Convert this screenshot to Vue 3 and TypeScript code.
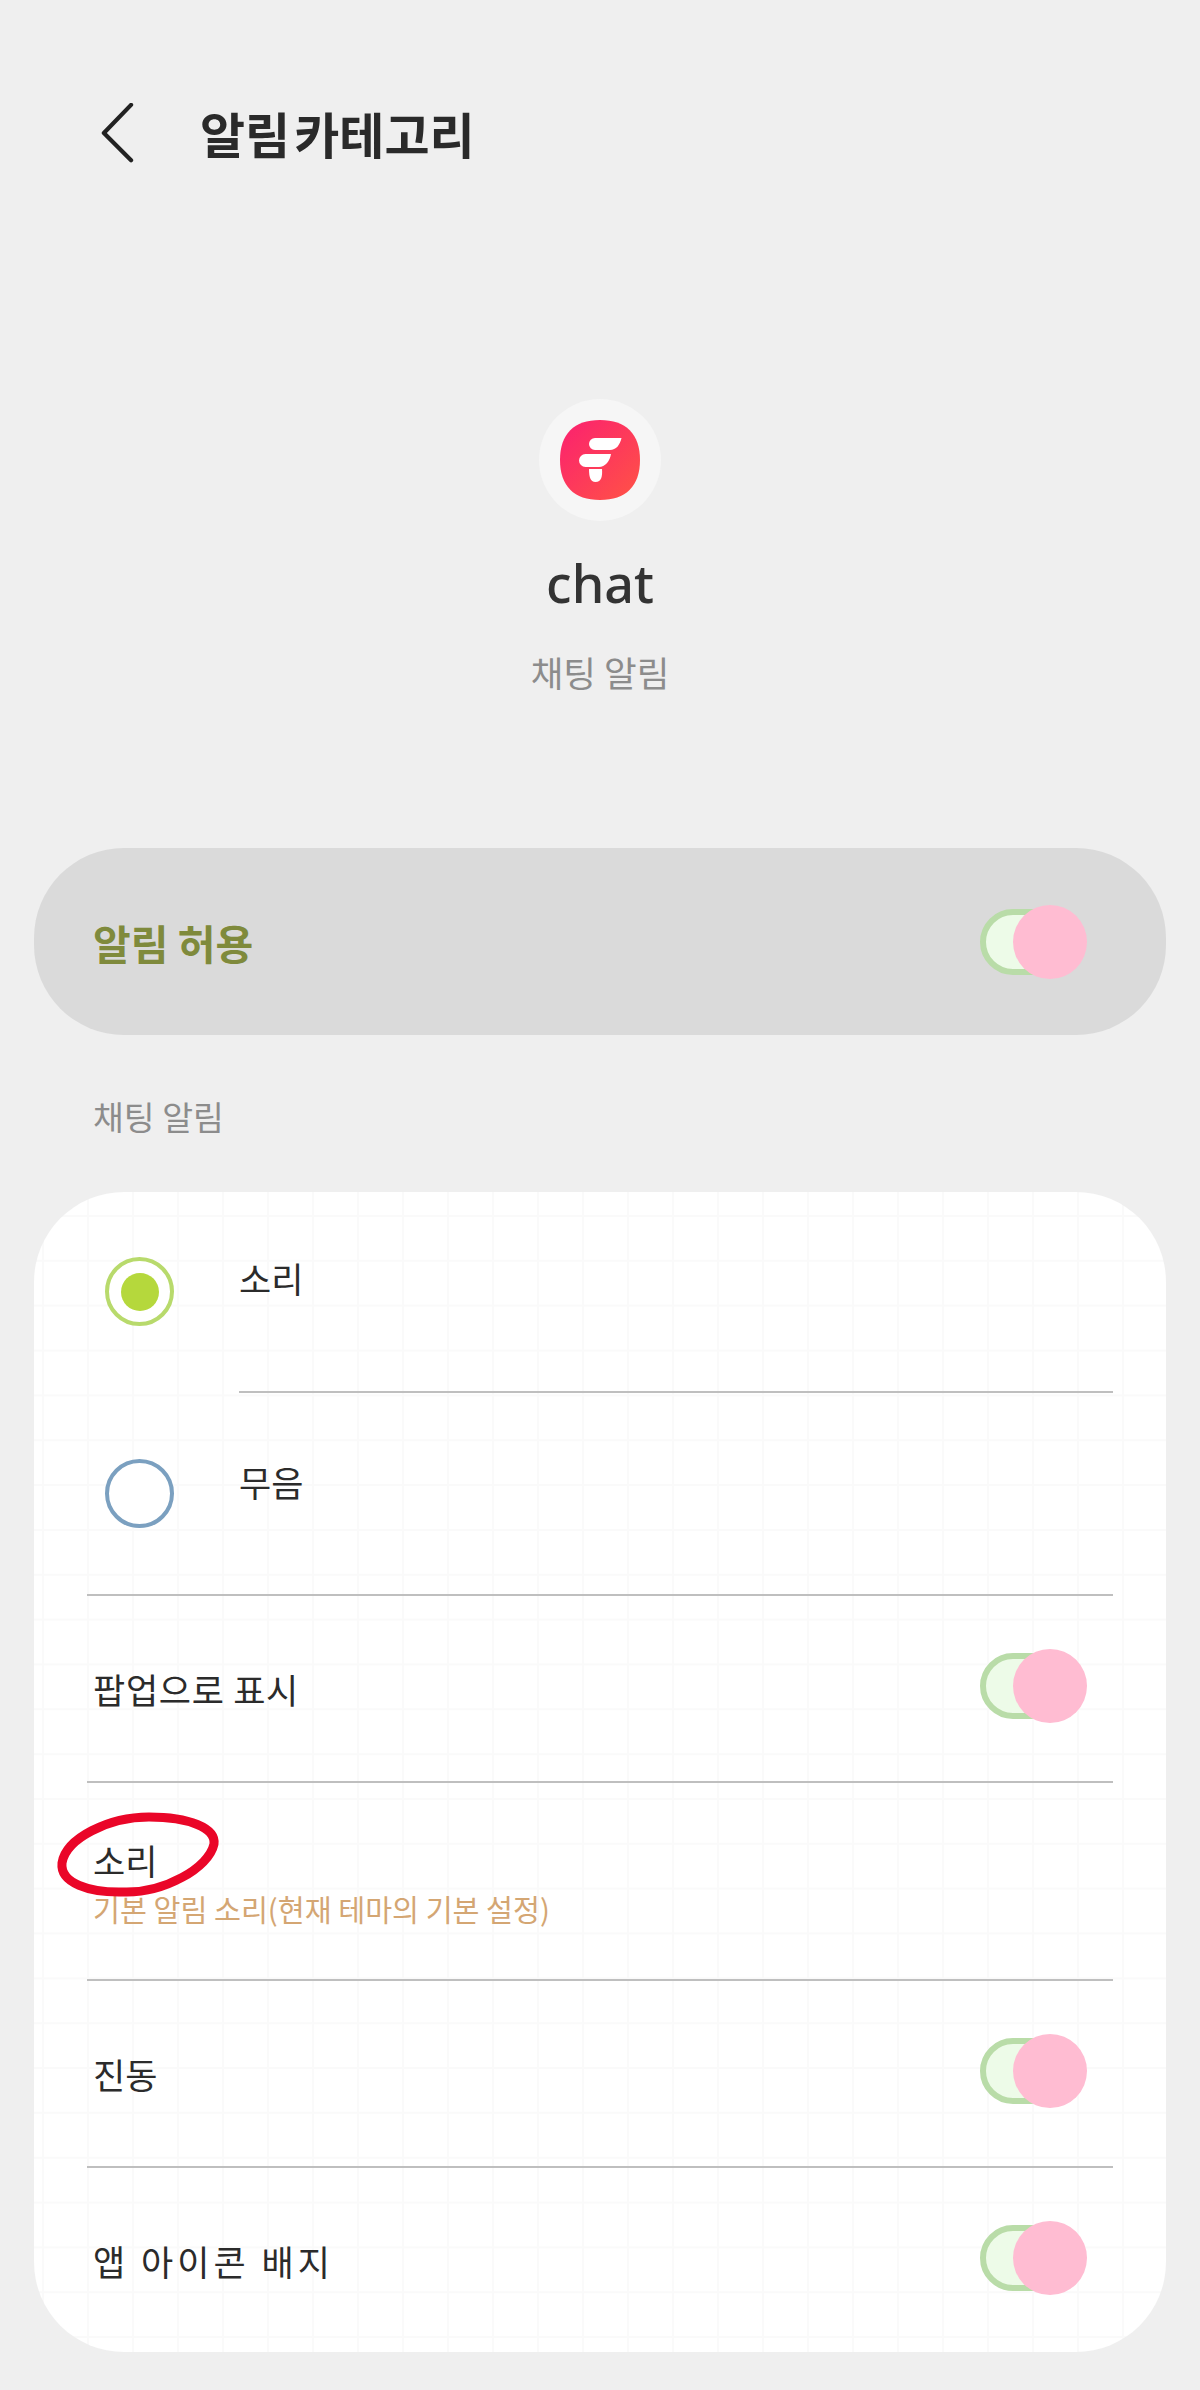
<template>
  <div class="page">
    <header class="top-bar">
      <svg class="back" viewBox="0 0 34 64" fill="none">
        <path d="M32 2 L3 32 L32 61" />
      </svg>
      <h1>알림 카테고리</h1>
    </header>

    <section class="app-info">
      <div class="icon-wrap">
        <svg class="app-icon" viewBox="0 0 80 80">
          <defs>
            <linearGradient id="logo" x1="0" y1="0" x2="1" y2="1">
              <stop offset="0" stop-color="#fb2070" />
              <stop offset="1" stop-color="#ff5345" />
            </linearGradient>
          </defs>
          <path fill="url(#logo)" d="M40 0C66 0 80 14 80 40C80 66 66 80 40 80C14 80 0 66 0 40C0 14 14 0 40 0Z" />
          <path fill="#fff" d="M35 18H61.5C60 25 56 30 50 30H35A6 6 0 0 1 35 18Z" />
          <path fill="#fff" d="M25.5 34H51C50 41 45 47 39 47H25.5A6.5 6.5 0 0 1 25.5 34Z" />
          <path fill="#fff" d="M29 49H42C42.5 56 41.5 62 35.5 62C30 62 29 56 29 49Z" />
        </svg>
      </div>
      <div class="app-name">chat</div>
      <div class="app-sub">채팅 알림</div>
    </section>

    <div class="allow-pill">
      <span>알림 허용</span>
      <div class="toggle"><i class="track"></i><i class="knob"></i></div>
    </div>

    <div class="section-label">채팅 알림</div>

    <div class="card">
      <div
        v-for="(r, i) in radios"
        :key="r.label"
        class="radio-row"
        :class="{ last: i === radios.length - 1 }"
      >
        <span class="radio" :class="{ on: r.on }"></span>
        <div class="radio-body"><span>{{ r.label }}</span></div>
      </div>

      <div class="row row-popup">
        <span>팝업으로 표시</span>
        <div class="toggle"><i class="track"></i><i class="knob"></i></div>
      </div>

      <div class="row row-sound">
        <div class="sound-text">
          <span class="circled">
            소리
            <svg class="scribble" viewBox="0 0 170 95" fill="none">
              <path d="M8 55C12 30 55 9 95 9C135 9 162 20 160 36C155 60 110 85 70 84C35 85 6 75 8 55Z" />
            </svg>
          </span>
          <small>기본 알림 소리(현재 테마의 기본 설정)</small>
        </div>
      </div>

      <div class="row row-vibrate">
        <span>진동</span>
        <div class="toggle"><i class="track"></i><i class="knob"></i></div>
      </div>

      <div class="row row-badge">
        <span>앱 아이콘 배지</span>
        <div class="toggle"><i class="track"></i><i class="knob"></i></div>
      </div>
    </div>
  </div>
</template>

<script setup lang="ts">
interface RadioItem {
  label: string;
  on: boolean;
}

const radios: RadioItem[] = [
  { label: '소리', on: true },
  { label: '무음', on: false }
];
</script>

<style>
html, body { background: #efefef; }
</style>

<style scoped>
.page {
  width: 1200px;
  height: 2390px;
  box-sizing: border-box;
  padding-top: 103px;
  background: #efefef;
  color: #2b2b2b;
  font-family: "Noto Sans CJK KR", "Noto Sans", sans-serif;
}
.top-bar { display: flex; align-items: center; height: 60px; padding-left: 100px; }
.back { width: 34px; height: 60px; }
.back path { stroke: #222; stroke-width: 4.5; stroke-linecap: round; stroke-linejoin: round; }
.top-bar h1 { margin: 0 0 0 66px; font-size: 49px; font-weight: 700; word-spacing: -7px; line-height: 60px; color: #2a2a2a; }

.app-info { display: flex; flex-direction: column; align-items: center; margin-top: 236px; }
.icon-wrap {
  width: 122px;
  height: 122px;
  border-radius: 50%;
  background: #f6f6f6;
  display: flex;
  align-items: center;
  justify-content: center;
}
.app-icon { width: 80px; height: 80px; }
.app-name { margin-top: 27px; font-family: "Noto Sans", sans-serif; font-size: 52px; font-weight: 500; line-height: 70px; color: #333; }
.app-sub { margin-top: 29px; font-size: 35.5px; line-height: 50px; color: #8c8c8c; }

.allow-pill {
  display: flex;
  align-items: center;
  justify-content: space-between;
  box-sizing: border-box;
  height: 187px;
  margin: 151px 34px 0;
  padding: 0 78px 0 59px;
  border-radius: 90px;
  background: #dadada;
  font-size: 41px;
  font-weight: 700;
  color: #7f8a3c;
}

.section-label { margin: 57px 0 0 93px; font-size: 33.5px; line-height: 48px; color: #8c8c8c; }

.card {
  box-sizing: border-box;
  height: 1160px;
  margin: 52px 34px 0;
  border-radius: 90px;
  background-color: #fff;
  background-image:
    linear-gradient(to right, #fafafa 2px, transparent 2px),
    linear-gradient(to bottom, #fafafa 2px, transparent 2px);
  background-size: 45px 44.85px;
  background-position: 8px 23px;
  font-size: 35px;
  color: #2b2b2b;
}

.radio-row { display: flex; height: 201px; margin: 0 53px; }
.radio-row.last { border-bottom: 2px solid #bfbfbf; }
.radio {
  flex: none;
  box-sizing: border-box;
  width: 69px;
  height: 69px;
  margin: 65px 65px 0 18px;
  border-radius: 50%;
  border: 4px solid #7ba0c0;
  background: #fff;
  display: flex;
  align-items: center;
  justify-content: center;
}
.radio-row.last .radio { margin-top: 66px; }
.radio.on { border-color: #b8da6c; }
.radio.on::after { content: ""; width: 38px; height: 38px; border-radius: 50%; background: #b5d83c; }
.radio-body { flex: 1; padding-top: 61px; line-height: 50px; border-bottom: 2px solid #bfbfbf; }
.radio-row.last .radio-body { padding-top: 64px; border-bottom: 0; }

.row {
  display: flex;
  align-items: center;
  justify-content: space-between;
  box-sizing: border-box;
  margin: 0 53px;
  padding: 0 25px 0 6px;
  border-bottom: 2px solid #bfbfbf;
}
.row-popup { height: 187px; }
.row-popup span { letter-spacing: 0.7px; }
.row-sound { height: 198px; align-items: flex-start; padding-top: 52px; }
.row-vibrate { height: 187px; }
.row-badge { height: 184px; border-bottom: 0; }
.row-badge span { letter-spacing: 4px; }
.row .toggle { margin-top: -5px; }

.sound-text { display: flex; flex-direction: column; }
.circled { position: relative; line-height: 50px; }
.sound-text small { margin-top: 2px; font-size: 29.3px; line-height: 42px; color: #d4a673; }
.scribble { position: absolute; left: -39px; top: -27px; width: 170px; height: 95px; filter: blur(0.6px); }
.scribble path { stroke: #ea0628; stroke-width: 9; }

.toggle { position: relative; flex: none; width: 108px; height: 74px; }
.track {
  position: absolute;
  left: 0;
  top: 4px;
  box-sizing: border-box;
  width: 84px;
  height: 66px;
  border: 6px solid #b9dca8;
  border-radius: 33px;
  background: #edfbe8;
}
.knob { position: absolute; right: 1px; top: 0; width: 74px; height: 74px; border-radius: 50%; background: #ffbcd2; }
</style>
